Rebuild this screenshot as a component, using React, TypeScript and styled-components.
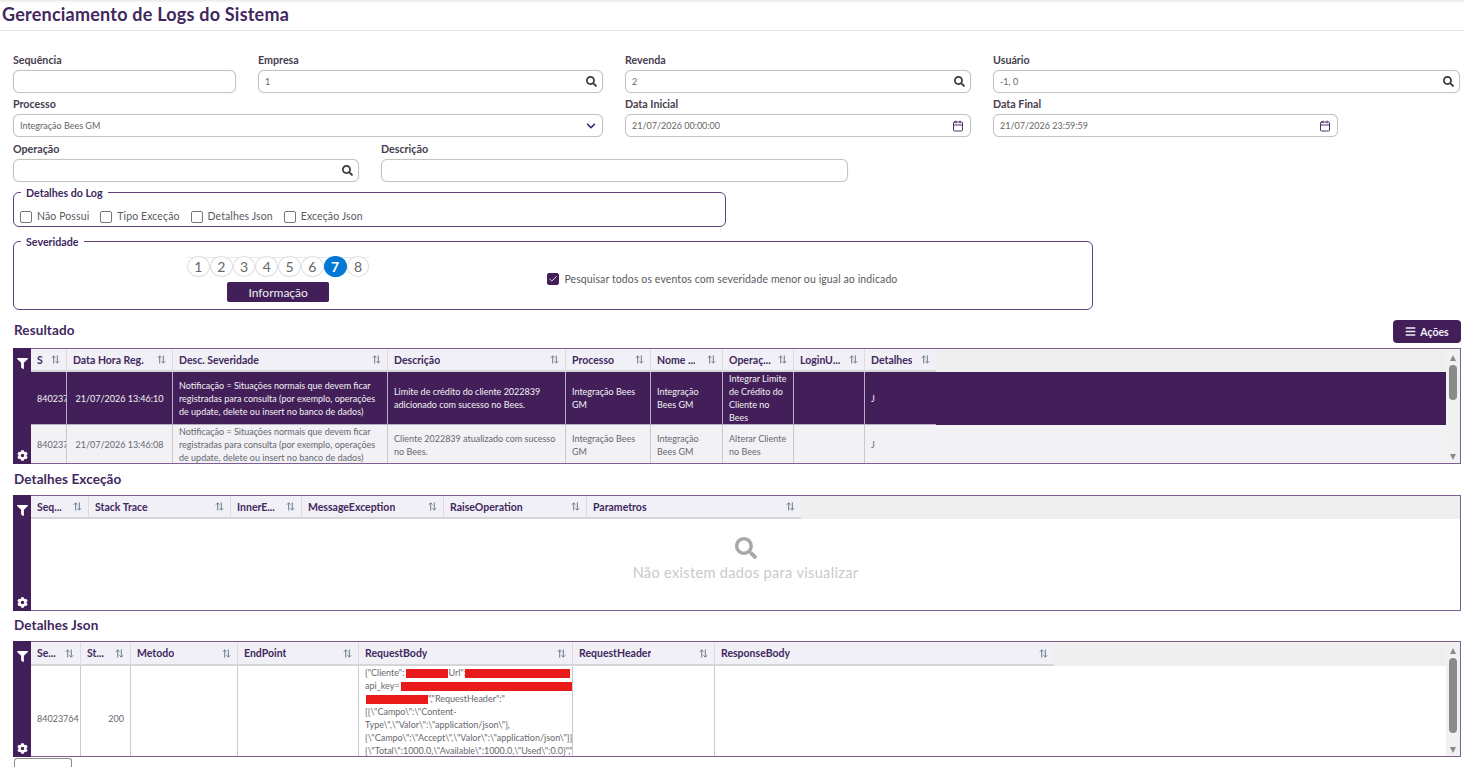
import React from "react";
import styled, { createGlobalStyle } from "styled-components";
import { FaSearch, FaFilter, FaCog, FaBars, FaChevronDown } from "react-icons/fa";
import { Calendar, Check } from "lucide-react";

const PURPLE = "#431f5a";
const INK = "#41285e";

const Global = createGlobalStyle`
  html, body { margin: 0; height: 100%; overflow: hidden; background: #fff; }
  body { font-family: "Lato", "Open Sans", sans-serif; color: #555; }
  * { box-sizing: border-box; }
`;

const Page = styled.div`
  width: 1472px;
  height: 767px;
  overflow: hidden;
`;
const TitleBar = styled.header`
  height: 31px;
  margin-right: 8px;
  padding: 5px 0 0 2px;
  border-bottom: 1px solid #e6e6e6;
  box-shadow: inset 0 3px 3px -2px #e2e2e2;
`;
const Title = styled.h1`
  margin: 0;
  font-size: 18px;
  line-height: 19px;
  font-weight: 700;
  color: ${INK};
  letter-spacing: 0.22px;
`;
const Content = styled.main`
  width: 1461px;
  padding: 22px 0 0 13px;
`;
const Row = styled.div<{ $gap?: number }>`
  display: flex;
  gap: 22px;
  margin-bottom: ${(p) => p.$gap ?? 4}px;
`;
const Field = styled.div<{ $w: number }>`
  width: ${(p) => p.$w}px;
`;
const Label = styled.label`
  display: block;
  height: 17px;
  font-size: 10.7px;
  line-height: 13px;
  font-weight: 700;
  color: #45404f;
`;
const InputBox = styled.div`
  display: flex;
  align-items: center;
  height: 23px;
  padding: 0 5px 0 6px;
  border: 1px solid #c4c4c4;
  border-radius: 6px;
  box-shadow: 0 0 1px #cfcfcf;
  background: #fff;
`;
const TextInput = styled.input`
  flex: 1;
  min-width: 0;
  border: 0;
  outline: 0;
  padding: 0;
  background: transparent;
  font: 400 9px "Lato", sans-serif;
  color: #666;
`;
const SearchIcon = styled(FaSearch)`
  width: 11px;
  height: 11px;
  color: #3a3a42;
`;
const ChevronIcon = styled(FaChevronDown)`
  width: 10px;
  height: 10px;
  margin-right: 1px;
  color: #4c2a7a;
`;
const CalendarIcon = styled(Calendar)`
  width: 12px;
  height: 12px;
  margin-right: 1px;
  color: #4f3168;
`;
const Group = styled.fieldset<{ $w: number; $h: number; $top: number }>`
  width: ${(p) => p.$w}px;
  height: ${(p) => p.$h}px;
  margin: ${(p) => p.$top}px 0 0;
  padding: 0;
  border: 1px solid #5f4279;
  border-radius: 6px;
  min-width: 0;
`;
const Legend = styled.legend`
  margin-left: 7px;
  padding: 0 5px;
  font-size: 10.7px;
  line-height: 13px;
  font-weight: 700;
  color: ${INK};
`;
const CheckRow = styled.div`
  display: flex;
  gap: 11px;
  padding: 11px 0 0 6px;
`;
const CheckItem = styled.span`
  display: inline-flex;
  align-items: center;
  gap: 5px;
  font-size: 10.5px;
  line-height: 13px;
  color: #5a5a62;
  letter-spacing: 0.11px;
`;
const Box = styled.span<{ $on?: boolean }>`
  display: inline-flex;
  align-items: center;
  justify-content: center;
  width: 12px;
  height: 12px;
  border: 1px solid ${(p) => (p.$on ? PURPLE : "#777")};
  border-radius: 2px;
  background: ${(p) => (p.$on ? PURPLE : "#fff")};
  color: #fff;
`;
const SeverityBody = styled.div`
  display: flex;
  align-items: center;
  gap: 178px;
  padding: 8px 0 0 173px;
`;
const Scale = styled.div`
  display: flex;
  flex-direction: column;
  align-items: center;
  width: 182.4px;
`;
const Steps = styled.div`
  display: flex;
  height: 26px;
  background: linear-gradient(#e8e8ec, #e8e8ec) no-repeat 0 1px / 100% 1px;
`;
const Step = styled.span<{ $on?: boolean }>`
  display: flex;
  align-items: center;
  justify-content: center;
  width: 22.8px;
  height: 21px;
  border-radius: 50%;
  border: 1px solid ${(p) => (p.$on ? "#0078d4" : "#e0e0e5")};
  background: ${(p) => (p.$on ? "#0078d4" : "#fff")};
  color: ${(p) => (p.$on ? "#fff" : "#666")};
  font-size: 14px;
  font-weight: ${(p) => (p.$on ? 700 : 400)};
`;
const SeverityName = styled.span`
  display: flex;
  align-items: center;
  justify-content: center;
  width: 102px;
  height: 20px;
  border-radius: 2px;
  background: ${PURPLE};
  color: #eee;
  font-size: 12px;
`;
const SectionBar = styled.div<{ $top: number; $h: number }>`
  display: flex;
  align-items: center;
  justify-content: space-between;
  height: ${(p) => p.$h}px;
  margin-top: ${(p) => p.$top}px;
  padding-left: 1px;
`;
const SectionTitle = styled.h2<{ $lift?: number }>`
  margin: 0 0 ${(p) => p.$lift ?? 0}px;
  font-size: 13.5px;
  line-height: 16px;
  font-weight: 700;
  color: ${INK};
  letter-spacing: 0.1px;
`;
const ActionButton = styled.button`
  display: flex;
  align-items: center;
  justify-content: center;
  gap: 4px;
  width: 68px;
  height: 23px;
  padding: 0;
  border: 0;
  border-radius: 4px;
  background: ${PURPLE};
  color: #f2eef6;
  font: 700 10.5px "Lato", sans-serif;
`;
const Frame = styled.section<{ $top: number }>`
  display: flex;
  height: 116px;
  margin-top: ${(p) => p.$top}px;
  border: 1px solid #7d6093;
  border-left: 0;
`;
const Rail = styled.div`
  display: flex;
  flex-direction: column;
  justify-content: space-between;
  align-items: center;
  width: 18px;
  flex: none;
  margin-top: -1px;
  margin-bottom: -1px;
  padding: 10px 0 3px;
  background: ${PURPLE};
  color: #fff;
  font-size: 11px;
`;
const Grid = styled.div`
  flex: 1;
  min-width: 0;
  display: flex;
  flex-direction: column;
  overflow: hidden;
`;
const HeadRow = styled.div<{ $h: number }>`
  display: flex;
  flex: none;
  height: ${(p) => p.$h}px;
  background: #efeff0;
`;
const HeadCell = styled.div<{ $w: number }>`
  display: flex;
  align-items: center;
  justify-content: space-between;
  gap: 4px;
  flex: none;
  width: ${(p) => p.$w}px;
  padding: 0 6px;
  background: #f0f0f6;
  border-right: 1px solid #dcdce0;
  border-bottom: 2px solid #d6d6da;
  font-size: 10.5px;
  font-weight: 700;
  color: ${INK};
  &:last-child { border-right: 0; }
`;
const HeadLabel = styled.span`
  overflow: hidden;
  white-space: nowrap;
`;
const SortGlyph = styled.svg`
  flex: none;
  width: 9px;
  height: 9px;
  fill: none;
  stroke: #66788c;
  stroke-width: 1.1;
`;
const BodyRow = styled.div<{ $bg: string; $fg: string }>`
  display: flex;
  flex: none;
  background: ${(p) => p.$bg};
  color: ${(p) => p.$fg};
`;
const Cell = styled.div<{ $w?: number; $align?: string; $line?: string }>`
  display: flex;
  align-items: center;
  justify-content: ${(p) => p.$align || "flex-start"};
  flex: none;
  width: ${(p) => (p.$w ? `${p.$w}px` : "auto")};
  padding: 0 6px;
  border-right: 1px solid ${(p) => p.$line || "#c9c9ce"};
  border-bottom: 1px solid ${(p) => p.$line || "#d8d8dc"};
  font-size: 9px;
  line-height: 13px;
  overflow: hidden;
  white-space: pre-line;
  &:last-child { border-right: 0; }
`;
const Stack = styled.div`
  display: flex;
  flex-direction: column;
  white-space: nowrap;
`;
const Redaction = styled.span<{ $w: number; $left?: number }>`
  display: inline-block;
  width: ${(p) => p.$w}px;
  height: 9px;
  margin-left: ${(p) => p.$left ?? 0}px;
  vertical-align: middle;
  background: #e81a1a;
`;
const Bar = styled.div`
  display: flex;
  flex-direction: column;
  align-items: center;
  flex: none;
  width: 14px;
  padding: 6px 0 3px;
  background: #f1f1f1;
`;
const ArrowUp = styled.span`
  width: 0;
  height: 0;
  border: 3.5px solid transparent;
  border-top: 0;
  border-bottom: 6px solid #8a8a8a;
`;
const ArrowDown = styled.span`
  margin-top: auto;
  width: 0;
  height: 0;
  border: 3.5px solid transparent;
  border-bottom: 0;
  border-top: 6px solid #8a8a8a;
`;
const Thumb = styled.span<{ $top: number; $h: number }>`
  width: 8px;
  height: ${(p) => p.$h}px;
  margin-top: ${(p) => p.$top}px;
  border-radius: 4px;
  background: #8a8a8a;
`;
const Empty = styled.div`
  flex: 1;
  display: flex;
  flex-direction: column;
  align-items: center;
  justify-content: center;
  gap: 5px;
  padding-bottom: 12px;
  color: #c9c9c9;
  font-size: 14.5px;
  letter-spacing: 0.35px;
`;
const EmptyIcon = styled(FaSearch)`
  width: 22px;
  height: 22px;
  color: #a8a8a8;
`;
const Stub = styled.div`
  width: 58px;
  height: 10px;
  margin: 1px 0 0 1px;
  border: 1px solid #8d8d8d;
  border-bottom: 0;
  border-radius: 3px 3px 0 0;
`;

const Sort = () => (
  <SortGlyph viewBox="0 0 10 10">
    <path d="M3 9.5V1M1 3l2-2 2 2M7 .5V9M5 7l2 2 2-2" />
  </SortGlyph>
);

type Col = [string, number];
const Head = ({ cols, h = 23 }: { cols: Col[]; h?: number }) => (
  <HeadRow $h={h}>
    {cols.map(([name, w]) => (
      <HeadCell key={name} $w={w}>
        <HeadLabel>{name}</HeadLabel>
        <Sort />
      </HeadCell>
    ))}
  </HeadRow>
);

const logCols: Col[] = [
  ["S", 36], ["Data Hora Reg.", 106], ["Desc. Severidade", 215], ["Descrição", 178],
  ["Processo", 85], ["Nome ...", 72], ["Operaç...", 71], ["LoginU...", 71], ["Detalhes", 71],
];
const excCols: Col[] = [
  ["Seq...", 58], ["Stack Trace", 142], ["InnerE...", 71], ["MessageException", 142],
  ["RaiseOperation", 143], ["Parametros", 214],
];
const jsonCols: Col[] = [
  ["Se...", 50], ["St...", 50], ["Metodo", 107], ["EndPoint", 121], ["RequestBody", 214],
  ["RequestHeader", 142], ["ResponseBody", 339],
];

const severity = "Notificação = Situações normais que devem ficar\nregistradas para consulta (por exemplo, operações\nde update, delete ou insert no banco de dados)";

const LogRow = ({ selected, time, desc, op }: { selected?: boolean; time: string; desc: string; op: string }) => {
  const line = selected ? "#b9aec4" : undefined;
  return (
    <BodyRow $bg={selected ? PURPLE : "#f1f1f6"} $fg={selected ? "#f2f2f2" : "#68686e"}>
      <Cell $w={36} $line={line}>84023764</Cell>
      <Cell $w={106} $align="center" $line={line}>{time}</Cell>
      <Cell $w={215} $line={line}>{severity}</Cell>
      <Cell $w={178} $line={line}>{desc}</Cell>
      <Cell $w={85} $line={line}>Integração Bees GM</Cell>
      <Cell $w={72} $line={line}>Integração Bees GM</Cell>
      <Cell $w={71} $line={line}>{op}</Cell>
      <Cell $w={71} $line={line} />
      <Cell $w={71} $line={line}>J</Cell>
    </BodyRow>
  );
};

const Rails = () => (
  <Rail>
    <FaFilter />
    <FaCog />
  </Rail>
);

export default function App() {
  return (
    <Page>
      <Global />
      <TitleBar>
        <Title>Gerenciamento de Logs do Sistema</Title>
      </TitleBar>
      <Content>
        <Row>
          <Field $w={223}>
            <Label>Sequência</Label>
            <InputBox><TextInput readOnly value="" /></InputBox>
          </Field>
          <Field $w={345}>
            <Label>Empresa</Label>
            <InputBox><TextInput readOnly value="1" /><SearchIcon /></InputBox>
          </Field>
          <Field $w={346}>
            <Label>Revenda</Label>
            <InputBox><TextInput readOnly value="2" /><SearchIcon /></InputBox>
          </Field>
          <Field $w={467}>
            <Label>Usuário</Label>
            <InputBox><TextInput readOnly value="-1, 0" /><SearchIcon /></InputBox>
          </Field>
        </Row>
        <Row $gap={5}>
          <Field $w={590}>
            <Label>Processo</Label>
            <InputBox><TextInput readOnly value="Integração Bees GM" /><ChevronIcon /></InputBox>
          </Field>
          <Field $w={346}>
            <Label>Data Inicial</Label>
            <InputBox><TextInput readOnly value="21/07/2026 00:00:00" /><CalendarIcon /></InputBox>
          </Field>
          <Field $w={345}>
            <Label>Data Final</Label>
            <InputBox><TextInput readOnly value="21/07/2026 23:59:59" /><CalendarIcon /></InputBox>
          </Field>
        </Row>
        <Row>
          <Field $w={346}>
            <Label>Operação</Label>
            <InputBox><TextInput readOnly value="" /><SearchIcon /></InputBox>
          </Field>
          <Field $w={467}>
            <Label>Descrição</Label>
            <InputBox><TextInput readOnly value="" /></InputBox>
          </Field>
        </Row>
        <Group $w={713} $h={41} $top={1}>
          <Legend>Detalhes do Log</Legend>
          <CheckRow>
            <CheckItem><Box />Não Possui</CheckItem>
            <CheckItem><Box />Tipo Exceção</CheckItem>
            <CheckItem><Box />Detalhes Json</CheckItem>
            <CheckItem><Box />Exceção Json</CheckItem>
          </CheckRow>
        </Group>
        <Group $w={1080} $h={75} $top={8}>
          <Legend>Severidade</Legend>
          <SeverityBody>
            <Scale>
              <Steps>
                {[1, 2, 3, 4, 5, 6, 7, 8].map((n) => (
                  <Step key={n} $on={n === 7}>{n}</Step>
                ))}
              </Steps>
              <SeverityName>Informação</SeverityName>
            </Scale>
            <CheckItem>
              <Box $on><Check size={10} strokeWidth={2} /></Box>
              Pesquisar todos os eventos com severidade menor ou igual ao indicado
            </CheckItem>
          </SeverityBody>
        </Group>
        <SectionBar $top={10} $h={23}>
          <SectionTitle $lift={3}>Resultado</SectionTitle>
          <ActionButton><FaBars size={11} />Ações</ActionButton>
        </SectionBar>
        <Frame $top={5}>
          <Rails />
          <Grid>
            <Head cols={logCols} />
            <LogRow selected time="21/07/2026 13:46:10"
              desc="Limite de crédito do cliente 2022839 adicionado com sucesso no Bees."
              op="Integrar Limite de Crédito do Cliente no Bees" />
            <LogRow time="21/07/2026 13:46:08"
              desc="Cliente 2022839 atualizado com sucesso no Bees."
              op="Alterar Cliente no Bees" />
          </Grid>
          <Bar>
            <ArrowUp />
            <Thumb $top={4} $h={35} />
            <ArrowDown />
          </Bar>
        </Frame>
        <SectionBar $top={7} $h={16}>
          <SectionTitle>Detalhes Exceção</SectionTitle>
        </SectionBar>
        <Frame $top={8}>
          <Rails />
          <Grid>
            <Head cols={excCols} />
            <Empty>
              <EmptyIcon />
              Não existem dados para visualizar
            </Empty>
          </Grid>
        </Frame>
        <SectionBar $top={6} $h={16}>
          <SectionTitle>Detalhes Json</SectionTitle>
        </SectionBar>
        <Frame $top={8}>
          <Rails />
          <Grid>
            <Head cols={jsonCols} h={24} />
            <BodyRow $bg="#fff" $fg="#68686e">
              <Cell $w={50}>84023764</Cell>
              <Cell $w={50} $align="flex-end">200</Cell>
              <Cell $w={107} />
              <Cell $w={121} />
              <Cell $w={214}>
                <Stack>
                  <span>{'{"Cliente":'}<Redaction $w={42} $left={2} />{'Url":"'}<Redaction $w={105} $left={-4} /></span>
                  <span>api_key=<Redaction $w={171} $left={1} /></span>
                  <span><Redaction $w={62} $left={1} />{'","RequestHeader":"'}</span>
                  <span>{'[{\\"Campo\\":\\"Content-'}</span>
                  <span>{'Type\\",\\"Valor\\":\\"application/json\\"},'}</span>
                  <span>{'{\\"Campo\\":\\"Accept\\",\\"Valor\\":\\"application/json\\"}]",'}</span>
                  <span>{'{\\"Total\\":1000.0,\\"Available\\":1000.0,\\"Used\\":0.0}","R'}</span>
                  <span>{'esponseHeader":""}'}</span>
                </Stack>
              </Cell>
              <Cell $w={142} />
              <Cell $w={339} />
            </BodyRow>
          </Grid>
          <Bar>
            <ArrowUp />
            <Thumb $top={4} $h={75} />
            <ArrowDown />
          </Bar>
        </Frame>
        <Stub />
      </Content>
    </Page>
  );
}
